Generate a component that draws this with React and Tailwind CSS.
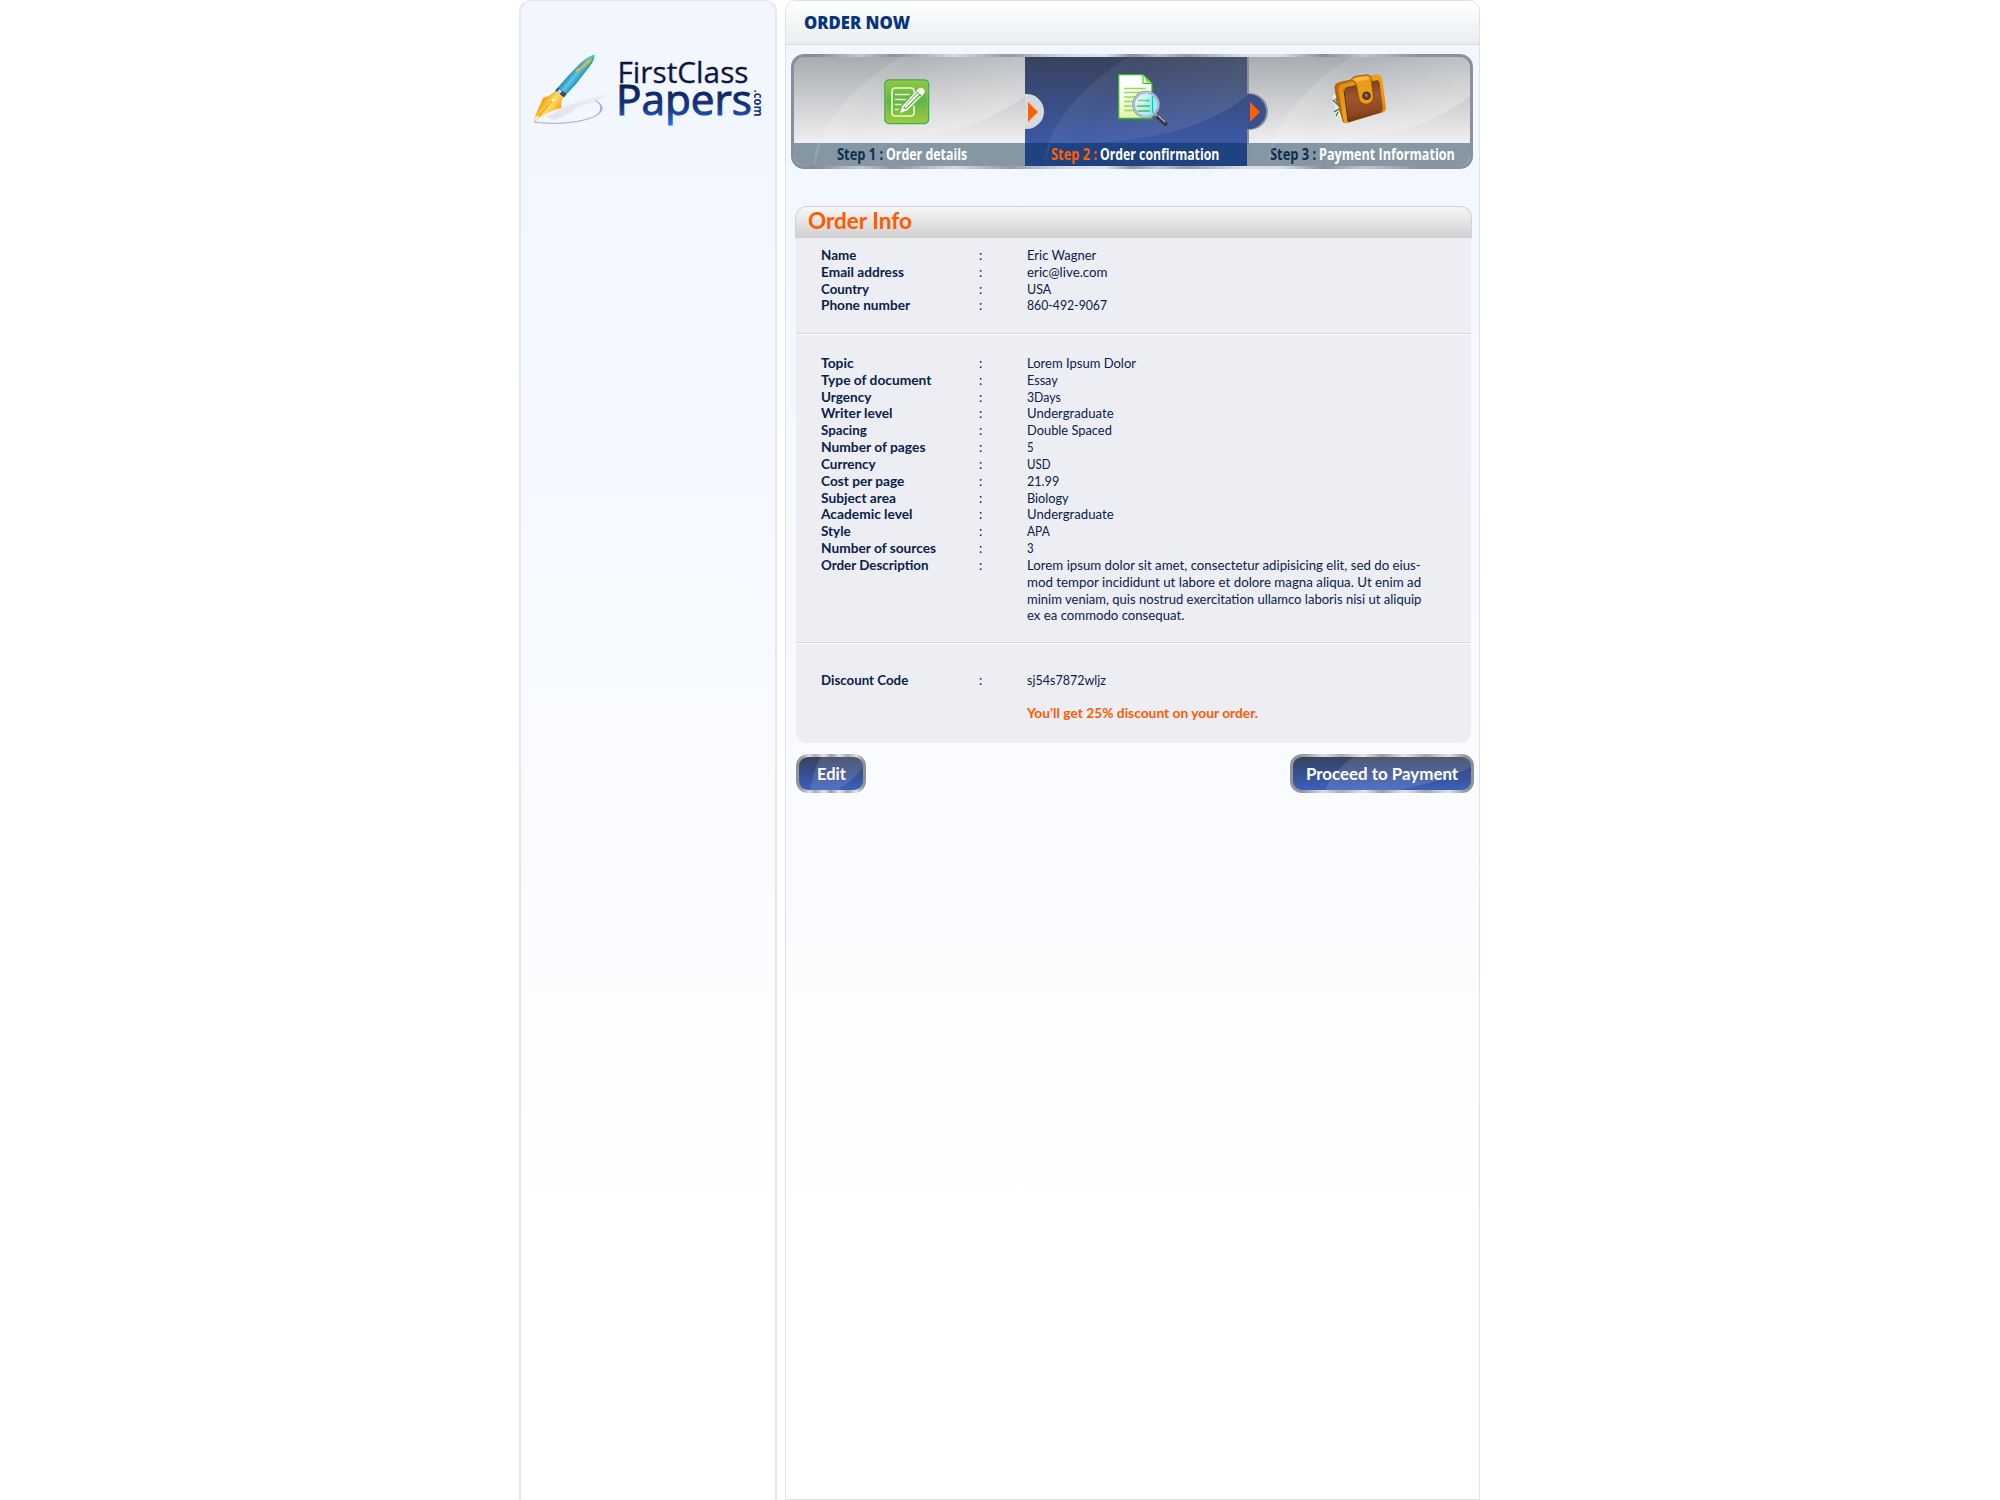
import { useLayoutEffect, useRef } from "react";

function Fit({ w, className = "", children }) {
  const ref = useRef(null);
  useLayoutEffect(() => {
    const el = ref.current;
    el.style.transform = `scaleX(${w / el.offsetWidth})`;
  }, [w]);
  return (
    <span className="inline-block whitespace-nowrap" style={{ width: w }}>
      <span ref={ref} className={`inline-block origin-left ${className}`}>
        {children}
      </span>
    </span>
  );
}

function Logo() {
  return (
    <svg width="240" height="80" viewBox="530 50 240 80" className="block">
      <defs>
        <linearGradient id="lt1" x1="0" y1="60" x2="0" y2="84" gradientUnits="userSpaceOnUse">
          <stop offset="0" stopColor="#10123a" />
          <stop offset="1" stopColor="#0a1c40" />
        </linearGradient>
        <linearGradient id="lt2" x1="0" y1="84" x2="0" y2="125" gradientUnits="userSpaceOnUse">
          <stop offset="0" stopColor="#0b1d4e" />
          <stop offset="0.6" stopColor="#143a86" />
          <stop offset="1" stopColor="#2a6fe0" />
        </linearGradient>
        <linearGradient id="pen" x1="569" y1="75" x2="580" y2="84" gradientUnits="userSpaceOnUse">
          <stop offset="0" stopColor="#2a8fb8" />
          <stop offset="0.35" stopColor="#58c8e8" />
          <stop offset="0.65" stopColor="#2fa5cc" />
          <stop offset="1" stopColor="#0f6590" />
        </linearGradient>
        <linearGradient id="nib" x1="544" y1="100" x2="561" y2="112" gradientUnits="userSpaceOnUse">
          <stop offset="0" stopColor="#f8a414" />
          <stop offset="0.4" stopColor="#ffdc6a" />
          <stop offset="0.65" stopColor="#ffc02e" />
          <stop offset="1" stopColor="#f28a06" />
        </linearGradient>
        <linearGradient id="sh" x1="545" y1="0" x2="612" y2="0" gradientUnits="userSpaceOnUse">
          <stop offset="0" stopColor="#dcdce0" />
          <stop offset="1" stopColor="#ecebf0" />
        </linearGradient>
      </defs>
      <path d="M546 117 L566 106 L590 98 L612 94 L592 103 L580 106 L570 113 L562 117 L554 120 Z" fill="url(#sh)" opacity="0.7" />
      <path d="M595 100.500 C605 105 605 113 592 117.500 C577 123 555 125 534 122 C555 125 580 123 593 117 C603 112.500 603 105 595 100.500 Z" fill="#9fa3dc" stroke="#9fa3dc" strokeWidth="0.600" />
      <path d="M594.500 54.500 Q595 60 590 66 L576 84 L565 96 L556.500 89 L568 76 L580 63.500 Q588 56 594.500 54.500 Z" fill="url(#pen)" />
      <path d="M592.500 57.500 Q590 60 590 63 Q587 64 585 67 Q581 69 580 70 L577.500 72.500 Q576 73 575.500 71 Q577 67.500 580 68.500 Q581 66 584 64.500 Q586 61 588 60.500 Z" fill="#e3b52d" />
      <path d="M558 87.500 L566.500 94 L564 97.500 L555 91 Z" fill="#3b4c5e" />
      <path d="M559.500 89 L562 91 L559.500 94.500 L556.500 92 Z" fill="#c9d3dc" />
      <path d="M554.500 91.500 L563.500 97.500 Q560 102 561.500 108 Q551 110 541 117 L533.500 122.500 L535.500 115 L543 98 Q550 96 554.500 91.500 Z" fill="url(#nib)" />
      <path d="M552 101 L535 121" stroke="#c97a0c" strokeWidth="0.700" />
      <circle cx="553.500" cy="100" r="1.700" fill="#fff8e0" />
      <path d="M533.500 122 L536 116 L540.500 117 Z" fill="#ffeab5" />
      <g fontFamily="'Open Sans', sans-serif">
        <text x="617.500" y="83" fontSize="29" textLength="131" lengthAdjust="spacingAndGlyphs" fill="url(#lt1)" stroke="url(#lt1)" strokeWidth="0.300">FirstClass</text>
        <text x="616" y="114.500" fontSize="41.500" textLength="136" lengthAdjust="spacingAndGlyphs" fill="url(#lt2)" stroke="url(#lt2)" strokeWidth="1">Papers</text>
        <text transform="translate(754 89.500) rotate(90)" fontSize="11.500" fontWeight="700" textLength="27" lengthAdjust="spacingAndGlyphs" fill="#123a80">.com</text>
      </g>
    </svg>
  );
}

function NoteIcon() {
  return (
    <svg width="46" height="46" viewBox="0 0 46 46">
      <defs>
        <linearGradient id="ng" x1="0" y1="0" x2="0" y2="1">
          <stop offset="0" stopColor="#8fc63f" />
          <stop offset="0.5" stopColor="#5fb646" />
          <stop offset="1" stopColor="#a4c93c" />
        </linearGradient>
      </defs>
      <rect x="1" y="1" width="43.500" height="43.500" rx="4" fill="url(#ng)" stroke="#3daf49" strokeWidth="1.500" />
      <rect x="2.200" y="2.200" width="41" height="41" rx="3" fill="none" stroke="#b6dc74" strokeOpacity="0.5" strokeWidth="0.800" />
      <path d="M30 13 V12 Q30 9 27 9 H11 Q8 9 8 12 V34 Q8 37 11 37 H27 Q30 37 30 34 V27" fill="none" stroke="#e9fbd5" strokeWidth="1.600" strokeLinecap="round" />
      <path d="M11.500 15.500 H25 M11.500 20.500 H21.500 M11.500 25.500 H17 M11.500 30.500 H14" stroke="#e9fbd5" strokeWidth="1.500" strokeLinecap="round" />
      <path d="M17 33 L19 27.500 L35 10 Q37 8.500 39 10.500 Q41 12.500 39.500 14 L23 30.500 Z" fill="#57ae42" stroke="#fff" strokeWidth="1.400" strokeLinejoin="round" />
      <path d="M21 28.500 L36.500 12.500" stroke="#fff" strokeWidth="1.900" />
      <path d="M17 33 L18.500 28.500 L22 31 Z M33 12 L38 16.500 L40 13.500 L38 9.500 Z" fill="#fff" />
      <path d="M32.500 12.700 L37 17" stroke="#57ae42" strokeWidth="1" />
    </svg>
  );
}

function DocIcon() {
  return (
    <svg width="50" height="54" viewBox="0 0 50 54">
      <defs>
        <linearGradient id="dg" x1="0" y1="0" x2="0.300" y2="1">
          <stop offset="0.4" stopColor="#fff" />
          <stop offset="1" stopColor="#dff3a8" />
        </linearGradient>
        <linearGradient id="lens" x1="0" y1="0.300" x2="1" y2="0.500">
          <stop offset="0" stopColor="#dfeef2" />
          <stop offset="0.5" stopColor="#b4eef5" />
          <stop offset="0.85" stopColor="#7df3fb" />
          <stop offset="1" stopColor="#c5e6f5" />
        </linearGradient>
      </defs>
      <path d="M0.700 0.700 H25 L34 10 V44.500 H0.700 Z" fill="url(#dg)" stroke="#35b71b" strokeWidth="1.300" />
      <path d="M25 0.700 V9.500 H34 Z" fill="#f4ffe0" stroke="#35b71b" strokeWidth="1" />
      <path d="M28 8 L33 9 L26 2 Z" fill="#8fd74b" />
      <path d="M6 14.500 H28 M6 18.500 H29 M6 23 H18 M6 27.500 H16 M6 32 H16 M6 36.500 H19" stroke="#93dc4d" strokeWidth="1.300" />
      <circle cx="28" cy="30.500" r="12" fill="url(#lens)" />
      <path d="M20 26.500 H31 M19 32 H32 M20 37 H32" stroke="#3cc04e" strokeWidth="1.500" fill="none" />
      <path d="M34.500 22 V39" stroke="#27b9a0" strokeWidth="1.200" />
      <path d="M18 29 Q20 20 31 20 L27 30 Q22 33 18 31 Z" fill="#fff" opacity="0.3" />
      <circle cx="28" cy="30.500" r="12.500" fill="none" stroke="#8d9bb8" strokeWidth="2.600" />
      <circle cx="28" cy="30.500" r="12.500" fill="none" stroke="#cbd4e6" strokeWidth="1" />
      <path d="M39 42 L47.500 50" stroke="#33363d" strokeWidth="4" strokeLinecap="round" />
      <path d="M36.500 39.500 L39 42" stroke="#9aa2b2" strokeWidth="2.500" />
      <path d="M40 41.500 L47 48" stroke="#b9bbc2" strokeWidth="1.200" />
    </svg>
  );
}

function WalletIcon() {
  return (
    <svg width="57" height="51" viewBox="0 0 57 51">
      <defs>
        <linearGradient id="wg" x1="0" y1="0" x2="0.150" y2="1">
          <stop offset="0" stopColor="#6e3a1c" />
          <stop offset="0.45" stopColor="#a0562c" />
          <stop offset="0.8" stopColor="#8f4820" />
          <stop offset="1" stopColor="#6d3415" />
        </linearGradient>
        <linearGradient id="wo" x1="0" y1="0" x2="1" y2="1">
          <stop offset="0" stopColor="#d98208" />
          <stop offset="0.5" stopColor="#efa01c" />
          <stop offset="1" stopColor="#d9890f" />
        </linearGradient>
      </defs>
      <path d="M1 22 L8 18 L15 42 L11 45 L8 41 L3 43 L1.500 41 L4.500 35 Z" fill="#e6eae0" />
      <path d="M4 25 L8 21 L13 40 L9 35 Z" fill="#5c7453" />
      <path d="M2 26 L9 33 M3 38 L8 35 L12 43 M5 42 L7 38" stroke="#3f5a40" strokeWidth="1.100" fill="none" />
      <path d="M3.500 13 Q4 9 9 8 L44 0.600 Q50 -0.500 51 4 L55 33 Q55.500 36 53 38 L16 49 Q12.500 50 11.500 47 L4.500 20 Z" fill="url(#wo)" />
      <path d="M3.500 13 Q4 9 9 8 L22 5 L21 7.500 L9.500 10.500 Q6.500 12 7.500 17 L13 48.500 Q12 48.500 11.500 47 L4.500 20 Z" fill="#b06a10" />
      <path d="M13.500 16 Q13.500 13.500 16 13 L46.500 6 L48.500 8 L52 35 L50 38.500 L17 48.500 Z" fill="url(#wg)" />
      <path d="M13 16 L17 47" stroke="#5b2c10" strokeWidth="1" />
      <path d="M20.500 5.500 Q21.500 2.500 25 2.200 L36 0.800 Q39.500 1 40 4.500 L42.500 22 Q42.500 28 37 30 Q30 31 28 25 L25 9.500 Z" fill="#eb9c1b" stroke="#7d430c" strokeWidth="0.800" />
      <path d="M22.500 5.500 Q25 3.500 36 2.200 L38.500 5 L25.500 7.800 Z" fill="#ffc555" opacity="0.7" />
      <circle cx="35.500" cy="21.700" r="4.300" fill="#54301f" />
      <circle cx="35.500" cy="21.700" r="2.200" fill="#7b5a4c" />
      <circle cx="35" cy="21" r="0.900" fill="#a98c80" />
    </svg>
  );
}

function Shine({ dark }) {
  return (
    <svg viewBox="0 0 225 109" preserveAspectRatio="none" className="absolute inset-0 h-full w-full">
      <defs>
        <linearGradient id={dark ? "sd" : "sl"} x1="0" y1="0" x2="1" y2="0.400">
          <stop offset="0" stopColor="#fff" stopOpacity={dark ? 0.1 : 0.32} />
          <stop offset="0.4" stopColor="#fff" stopOpacity={dark ? 0.05 : 0.08} />
          <stop offset="1" stopColor="#fff" stopOpacity={dark ? 0.1 : 0.3} />
        </linearGradient>
      </defs>
      <path d="M105 0 C62 26 28 62 20 100 L20 109 L26 86 C115 88 180 74 225 39 V0 Z" fill={dark ? "url(#sd)" : "url(#sl)"} />
    </svg>
  );
}

function Arrow({ dark }) {
  return (
    <div
      className={
        "absolute left-0 top-[37px] z-10 flex h-[35px] w-[19px] items-center rounded-r-full pl-[3px] " +
        (dark ? "bg-[#3a4f8b] shadow-[1px_0_0_1px_#8c909c]" : "bg-[#d8d9dc]")
      }
    >
      <svg width="10" height="20" viewBox="0 0 10 20">
        <path d="M0 0 L10 10 L0 20 Z" fill="#ff6000" />
      </svg>
    </div>
  );
}

function StepLabel({ pad, n, nw, text, tw, active }) {
  return (
    <div
      className={
        "absolute inset-x-0 bottom-0 flex h-[23px] items-center gap-[3px] pb-[2px] text-[16.500px] font-bold leading-[21px] " +
        pad +
        (active ? " bg-[#1f4280]" : " bg-[#8597a3]")
      }
    >
      <Fit w={nw} className={active ? "text-[#ff6000]" : "text-[#0c2f52]"}>{n}</Fit>
      <Fit w={tw} className="text-white">{text}</Fit>
    </div>
  );
}

function Steps() {
  return (
    <div className="ml-[6px] mt-[9px] h-[115px] w-[682px] rounded-[13px] bg-[linear-gradient(90deg,#8b8e9a_0%,#8b8e9a_4%,#c3c7d3_10%,#8f929e_15%,#d5dae6_24%,#9599a4_32%,#d3d8e4_40%,#dfe6ee_46%,#8d8f99_50%,#c0c4cf_54%,#9699a3_58%,#d8dde8_66%,#d8dde8_72%,#8b8d98_78%,#c2c5d0_84%,#8e919d_92%,#8e919d_100%)] p-[3px] font-['Open_Sans',sans-serif]">
      <div className="flex h-[109px] overflow-hidden rounded-[10px]">
        <div className="relative w-[231px] bg-[linear-gradient(#a8acaf,#f0f0f2_80%)]">
          <StepLabel pad="pl-[43px]" n="Step 1 :" nw={46} text="Order details" tw={81} />
          <Shine />
          <div className="absolute left-[90px] top-[22px]"><NoteIcon /></div>
        </div>
        <div className="relative w-[222px] bg-[linear-gradient(#38425c,#3c59a8_80%)]">
          <StepLabel pad="pl-[26px]" n="Step 2 :" nw={46} text="Order confirmation" tw={119} active />
          <Shine dark />
          <Arrow />
          <div className="absolute left-[93px] top-[17px]"><DocIcon /></div>
        </div>
        <div className="relative w-[223px] border-l-2 border-[#8c909a] bg-[linear-gradient(#a8acaf,#f0f0f2_80%)]">
          <StepLabel pad="pl-[21px]" n="Step 3 :" nw={46} text="Payment Information" tw={136} />
          <Shine />
          <div className="absolute -left-[2px] top-0"><Arrow dark /></div>
          <div className="absolute left-[82px] top-[17px]"><WalletIcon /></div>
        </div>
      </div>
    </div>
  );
}

function Row({ label, lw, value, vw }) {
  return (
    <div className="flex h-[16.830px] items-center">
      <div className="w-[158px] font-bold"><Fit w={lw}>{label}</Fit></div>
      <div className="w-[48px]">:</div>
      <div><Fit w={vw}>{value}</Fit></div>
    </div>
  );
}

const contact = [
  ["Name", 35, "Eric Wagner", 69],
  ["Email address", 83, "eric@live.com", 81],
  ["Country", 48, "USA", 24],
  ["Phone number", 89, "860-492-9067", 80],
];

const details = [
  ["Topic", 33, "Lorem Ipsum Dolor", 109],
  ["Type of document", 110, "Essay", 31],
  ["Urgency", 50, "3Days", 34],
  ["Writer level", 72, "Undergraduate", 87],
  ["Spacing", 46, "Double Spaced", 85],
  ["Number of pages", 104, "5", 7],
  ["Currency", 55, "USD", 24],
  ["Cost per page", 83, "21.99", 32],
  ["Subject area", 75, "Biology", 42],
  ["Academic level", 91, "Undergraduate", 87],
  ["Style", 30, "APA", 23],
  ["Number of sources", 115, "3", 7],
  ["Order Description", 107, "Lorem ipsum dolor sit amet, consectetur adipisicing elit, sed do eius-", 394],
];

const more = [
  ["mod tempor incididunt ut labore et dolore magna aliqua. Ut enim ad", 394],
  ["minim veniam, quis nostrud exercitation ullamco laboris nisi ut aliquip", 394],
  ["ex ea commodo consequat.", 157],
];

function Divider() {
  return <div className="h-[2px] border-t border-[#d5d7dd] bg-white" />;
}

function Button({ text, w, className }) {
  return (
    <button
      className={
        "h-[39px] rounded-[12px] bg-[linear-gradient(90deg,#8f9396_0%,#9a9da0_8%,#d9dcdf_18%,#a9acae_28%,#e3e6e8_40%,#9b9ea0_50%,#e3e6e8_62%,#a3a6a8_74%,#dfe2e4_86%,#8f9396_96%)] p-[3px] " +
        className
      }
    >
      <span className="relative flex h-full items-center justify-center overflow-hidden rounded-[9px] bg-[linear-gradient(#37425e,#3a5fc0)] text-[17px] font-bold text-white">
        <svg viewBox="0 0 100 33" preserveAspectRatio="none" className="absolute inset-0 h-full w-full">
          <path d="M34 0 Q22 14 18 33 H60 Q85 24 100 10 V0 Z" fill="#fff" fillOpacity="0.12" />
        </svg>
        <Fit w={w} className="relative">{text}</Fit>
      </span>
    </button>
  );
}

export default function App() {
  return (
    <div className="h-[1500px] w-[2000px] overflow-hidden bg-white font-['Lato',sans-serif] text-[#0a2148]">
      <div className="ml-[519px] flex h-full">
        <aside className="h-full w-[258px] rounded-t-[12px] border-x-2 border-t border-[#e6e7ea] bg-[linear-gradient(#f2f6ff_0,#f3f7ff_300px,#f9fbff_800px,#ffffff_1250px)] pl-[9px] pt-[49px]">
          <Logo />
        </aside>
        <main className="ml-[8px] h-full w-[695px] rounded-t-[11px] border border-[#dfe1e5] bg-[linear-gradient(#f2f6ff_0,#f3f7ff_240px,#fafbff_800px,#ffffff_1250px)]">
          <header className="flex h-[44px] items-center rounded-t-[10px] border-b border-[#d5dce2] bg-[linear-gradient(#ffffff,#e9eef0)] pl-[18px] pt-px font-['Open_Sans',sans-serif] text-[17px] font-extrabold text-[#07347e]">
            <Fit w={106}>ORDER NOW</Fit>
          </header>
          <div className="-ml-px"><Steps /></div>
          <div className="ml-[9px] mt-[37px] w-[677px]">
            <h2 className="flex h-[32px] items-center rounded-t-[12px] border-x border-t border-[#d2d2d4] bg-[linear-gradient(#f7f7f7,#cfcfcf)] pb-[3px] pl-[12px] text-[22.500px] font-bold text-[#ff5a00]">
              <Fit w={104}>Order Info</Fit>
            </h2>
            <div className="ml-px h-[505px] w-[675px] rounded-b-[11px] bg-[#edeef4] text-[13px] leading-[16.830px]">
              <div className="h-[95px] pl-[25px] pt-[9px]">
                {contact.map(([a, b, c, d]) => <Row key={a} label={a} lw={b} value={c} vw={d} />)}
              </div>
              <Divider />
              <div className="h-[307px] pl-[25px] pt-[20px]">
                {details.map(([a, b, c, d]) => <Row key={a} label={a} lw={b} value={c} vw={d} />)}
                {more.map(([t, w]) => (
                  <div key={t} className="ml-[206px] flex h-[16.830px] items-center"><Fit w={w}>{t}</Fit></div>
                ))}
              </div>
              <Divider />
              <div className="pl-[25px] pt-[28px]">
                <Row label="Discount Code" lw={87} value="sj54s7872wljz" vw={79} />
                <div className="ml-[206px] mt-[16px] font-bold text-[#ff5a00]">
                  <Fit w={231}>You’ll get 25% discount on your order.</Fit>
                </div>
              </div>
            </div>
          </div>
          <div className="ml-[10px] mt-[11px] flex w-[678px] justify-between">
            <Button text="Edit" w={29} className="w-[70px]" />
            <Button text="Proceed to Payment" w={152} className="w-[184px]" />
          </div>
        </main>
      </div>
    </div>
  );
}
